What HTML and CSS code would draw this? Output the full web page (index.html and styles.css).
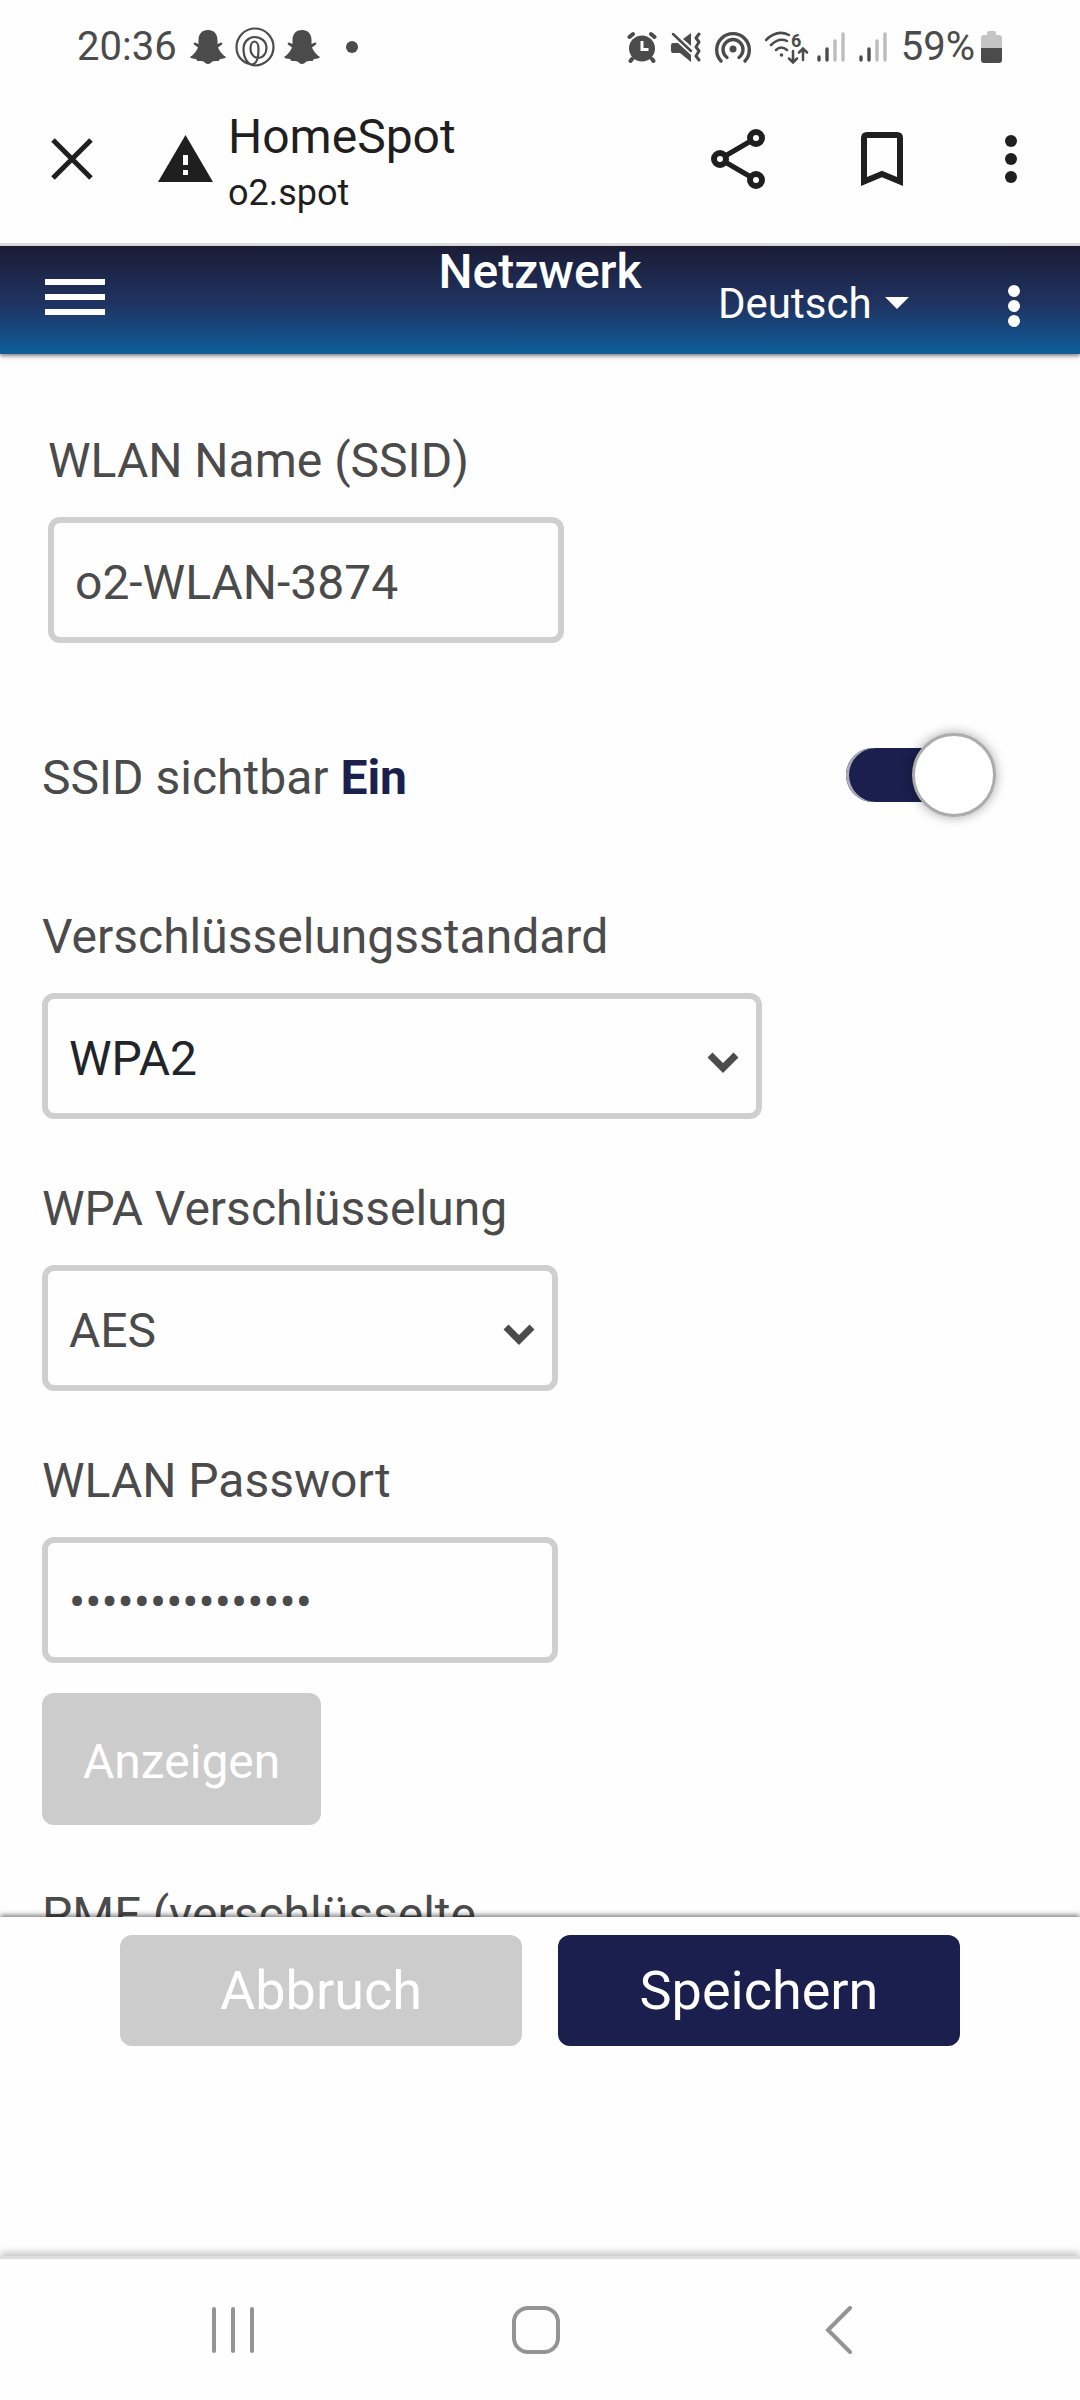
FILE: index.html
```html
<!DOCTYPE html>
<html lang="de">
<head>
    <meta charset="UTF-8">
    <meta name="viewport" content="width=device-width, initial-scale=1.0">
    <title>HomeSpot</title>
    <link rel="stylesheet" href="styles.css">
</head>
<body>
    <div class="status-bar">
        <div class="status-left">
            <span class="time">20:36</span>
            <svg width="36" height="36" viewBox="0 0 36 36" fill="#4b4b4b">
                <path d="M18 1c-6 0-9.500 4-9.500 10v4L5 13.500q-2 0-1 2l4 3C6.500 22 3.500 26 0 28c1 2 3 1.500 6 2l1.500 2c3 0 4.500-.5 6 .5C15 33.500 16 35 18 35s3-1.500 4.500-2.500c1.500-1 3-.5 6-.5l1.500-2c3-.5 5 0 6-2-3.500-2-6.500-6-8-9.500l4-3q1-2-1-2L27.500 15v-4c0-6-3.500-10-9.500-10z"/>
            </svg>
            <svg width="40" height="40" viewBox="0 0 40 40" fill="none" stroke="#4b4b4b" stroke-width="2.200">
                <path d="M17 37.500C7 36 1.500 29 1.500 20a18.500 18.500 0 1 1 18.500 18.500C13 38.500 8.500 31 8.500 22c0-7 5-12 11-12s12 4 12 11c0 6-4 10-8 10-4.500 0-8-4-8-9 0-4 1.500-7.500 4-7.500s4 3.500 4 7.500c0 7-1 15-6.500 15.500"/>
            </svg>
            <svg width="36" height="36" viewBox="0 0 36 36" fill="#4b4b4b">
                <path d="M18 1c-6 0-9.500 4-9.500 10v4L5 13.500q-2 0-1 2l4 3C6.500 22 3.500 26 0 28c1 2 3 1.500 6 2l1.500 2c3 0 4.500-.5 6 .5C15 33.500 16 35 18 35s3-1.500 4.500-2.500c1.500-1 3-.5 6-.5l1.500-2c3-.5 5 0 6-2-3.500-2-6.500-6-8-9.500l4-3q1-2-1-2L27.500 15v-4c0-6-3.500-10-9.500-10z"/>
            </svg>
            <span class="more-dot"></span>
        </div>
        <div class="status-right">
            <svg width="30" height="32" viewBox="0 0 30 32">
                <g stroke="#4b4b4b" stroke-width="4" stroke-linecap="round">
                    <path d="M2.500 6L6 3M27.500 6L24 3M5 28l-1.500 2M25 28l1.500 2"/>
                </g>
                <circle cx="15" cy="17.500" r="13" fill="#4b4b4b"/>
                <path d="M15 10v8.500h6.500" fill="none" stroke="#fefefe" stroke-width="3"/>
            </svg>
            <svg width="30" height="32" viewBox="0 0 30 32" fill="#4b4b4b">
                <path d="M2 12h5l13 12v7L9 22H2q-2 0-2-2v-6q0-2 2-2zM20 2v13l-8-7z"/>
                <path d="M2 3l18 17" fill="none" stroke="#4b4b4b" stroke-width="2.500" stroke-linecap="round"/>
                <path d="M28 3l-3 4 3 4-3 5 3 4-3 5 3 4" fill="none" stroke="#4b4b4b" stroke-width="3" stroke-linecap="round" stroke-linejoin="round"/>
            </svg>
            <svg width="36" height="34" viewBox="0 0 36 34" fill="none" stroke="#4b4b4b" stroke-width="3.400" stroke-linecap="round">
                <circle cx="18" cy="19" r="3.500" fill="#4b4b4b" stroke="none"/>
                <path d="M6 31a16.300 16.300 0 1 1 24 0"/>
                <path d="M12 27.500a10 10 0 1 1 12 0"/>
            </svg>
            <div class="network">
                <svg width="44" height="34" viewBox="0 0 44 34" fill="none" stroke="#4b4b4b" stroke-width="2.500" stroke-linecap="round">
                    <path d="M1 10Q12-1 24 5M6 15q8-8 16-4M11 20q5-5 11 0"/>
                    <circle cx="16.500" cy="25" r="1.800" fill="#4b4b4b" stroke="none"/>
                    <path d="M28 21v11M24 28.500l4 4 4-4M38 30V19M34 22.500l4-4 4 4"/>
                    <text class="wifi-gen" x="26" y="17">6</text>
                </svg>
                <svg width="28" height="32" viewBox="0 0 28 32" stroke-width="3.400" stroke-linecap="round">
                    <path d="M2 26v3M10 18v11" stroke="#4b4b4b"/>
                    <path d="M18 10v19M26 3v26" stroke="#bcbcbc"/>
                </svg>
            </div>
            <svg width="28" height="32" viewBox="0 0 28 32" stroke-width="3.400" stroke-linecap="round">
                <path d="M2 26v3M10 18v11" stroke="#4b4b4b"/>
                <path d="M18 10v19M26 3v26" stroke="#bcbcbc"/>
            </svg>
            <div class="battery">
                <span>59%</span>
                <svg width="21" height="32" viewBox="0 0 21 32">
                    <path d="M6 2q0-2 2-2h5q2 0 2 2v2h3q3 0 3 3v10H0V7q0-3 3-3h3z" fill="#c4c4c4"/>
                    <path d="M0 17h21v12q0 3-3 3H3q-3 0-3-3z" fill="#4b4b4b"/>
                </svg>
            </div>
        </div>
    </div>

    <div class="browser-bar">
        <button class="icon-button" aria-label="Schließen">
            <svg width="42" height="42" viewBox="0 0 42 42" stroke="#1f1f1f" stroke-width="5"><path d="M2 2l38 38M40 2L2 40"/></svg>
        </button>
        <div class="site">
            <svg width="55" height="48" viewBox="0 0 55 48">
                <path d="M27.500 0L55 47H0z" fill="#1f1f1f"/>
                <path d="M25 20h5v10h-5zM25 35h5v5h-5z" fill="#fefefe"/>
            </svg>
            <div class="site-text">
                <div class="site-title">HomeSpot</div>
                <div class="site-host">o2.spot</div>
            </div>
        </div>
        <div class="browser-actions">
            <button class="icon-button" aria-label="Teilen">
                <svg width="54" height="60" viewBox="0 0 54 60" fill="none" stroke="#1f1f1f" stroke-width="6">
                    <path d="M9 30L45 9M9 30l36 21" stroke-width="5"/>
                    <circle cx="9" cy="30" r="6" fill="#fefefe"/>
                    <circle cx="45" cy="9" r="6" fill="#fefefe"/>
                    <circle cx="45" cy="51" r="6" fill="#fefefe"/>
                </svg>
            </button>
            <button class="icon-button" aria-label="Lesezeichen">
                <svg width="42" height="54" viewBox="0 0 42 54" fill="none" stroke="#1f1f1f" stroke-width="6">
                    <path d="M3 49.500V6q0-3 3-3h30q3 0 3 3v43.500L21 42z"/>
                </svg>
            </button>
            <button class="icon-button" aria-label="Menü">
                <svg width="24" height="48" viewBox="0 0 24 48" fill="#1f1f1f">
                    <circle cx="12" cy="6" r="6"/><circle cx="12" cy="24" r="6"/><circle cx="12" cy="42" r="6"/>
                </svg>
            </button>
        </div>
    </div>

    <header class="header">
        <button class="icon-button menu-button" aria-label="Navigation">
            <span class="bar"></span>
            <span class="bar"></span>
            <span class="bar"></span>
        </button>
        <h1>Netzwerk</h1>
        <div class="header-right">
            <div class="language">
                <select aria-label="Sprache">
                    <option>Deutsch</option>
                </select>
                <svg width="24" height="12" viewBox="0 0 24 12" fill="#fff"><path d="M0 0h24L12 12z"/></svg>
            </div>
            <button class="icon-button" aria-label="Mehr">
                <svg width="12" height="48" viewBox="0 0 12 48" fill="#fff">
                    <circle cx="6" cy="12" r="6"/><circle cx="6" cy="27" r="6"/><circle cx="6" cy="42" r="6"/>
                </svg>
            </button>
        </div>
    </header>

    <main>
        <form id="network-form">
            <div class="field field-ssid">
                <label for="ssid">WLAN Name (SSID)</label>
                <input type="text" id="ssid" value="o2-WLAN-3874">
            </div>
            <div class="switch-row">
                <label for="visible">SSID sichtbar <strong>Ein</strong></label>
                <input type="checkbox" id="visible" class="switch" checked>
            </div>
            <div class="field">
                <label for="standard">Verschlüsselungsstandard</label>
                <div class="select select-wide">
                    <select id="standard">
                        <option>WPA2</option>
                    </select>
                    <svg width="34" height="22" viewBox="0 0 34 22"><path d="M4 4l13 13L30 4" fill="none" stroke="#4b4b4b" stroke-width="7"/></svg>
                </div>
            </div>
            <div class="field">
                <label for="cipher">WPA Verschlüsselung</label>
                <div class="select">
                    <select id="cipher" class="muted">
                        <option>AES</option>
                    </select>
                    <svg width="34" height="22" viewBox="0 0 34 22"><path d="M4 4l13 13L30 4" fill="none" stroke="#4b4b4b" stroke-width="7"/></svg>
                </div>
            </div>
            <div class="field">
                <label for="password">WLAN Passwort</label>
                <input type="password" id="password" value="passwortpasswor">
                <button type="button" class="btn btn-show">Anzeigen</button>
            </div>
            <div class="field">
                <span class="label">PMF (verschlüsselte</span>
            </div>
        </form>
    </main>

    <footer class="actions">
        <button type="reset" form="network-form" class="btn">Abbruch</button>
        <button type="submit" form="network-form" class="btn btn-primary">Speichern</button>
    </footer>

    <nav class="system-nav">
        <button class="icon-button" aria-label="Letzte Apps">
            <svg width="44" height="48" viewBox="0 0 44 48" stroke="#949494" stroke-width="4" stroke-linecap="round"><path d="M3 3v42M22 3v42M41 3v42"/></svg>
        </button>
        <button class="icon-button" aria-label="Startseite">
            <svg width="48" height="48" viewBox="0 0 48 48" fill="none" stroke="#949494" stroke-width="4"><rect x="2" y="2" width="44" height="44" rx="14"/></svg>
        </button>
        <button class="icon-button" aria-label="Zurück">
            <svg width="28" height="48" viewBox="0 0 28 48" fill="none" stroke="#949494" stroke-width="4" stroke-linecap="round"><path d="M25 2L3 24l22 22"/></svg>
        </button>
    </nav>
</body>
</html>
```
FILE: styles.css
```css
*, *::before, *::after {
    box-sizing: border-box;
}
body {
    font-family: Roboto, "Liberation Sans", sans-serif;
    font-size: 48px;
    line-height: 72px;
    margin: 0;
    height: 100vh;
    display: flex;
    flex-direction: column;
    background: #fefefe;
    color: #4b4b4b;
}
svg {
    display: block;
    flex-shrink: 0;
}
button, input, select {
    font-family: inherit;
    font-size: 48px;
    color: inherit;
    margin: 0;
}
.icon-button {
    background: none;
    border: none;
    padding: 0;
    cursor: pointer;
}

/* status bar */
.status-bar {
    display: flex;
    justify-content: space-between;
    align-items: center;
    flex-shrink: 0;
    height: 75px;
    padding: 18px 78px 0 77px;
    font-size: 40px;
    line-height: 48px;
}
.status-left, .status-right, .network, .battery {
    display: flex;
    align-items: center;
}
.status-left {
    gap: 9px;
}
.status-right {
    gap: 14px;
}
.network {
    gap: 8px;
}
.battery {
    gap: 6px;
}
.time {
    margin-right: 4px;
}
.more-dot {
    width: 12px;
    height: 12px;
    margin-left: 17px;
    border-radius: 50%;
    background: #4b4b4b;
}
.wifi-gen {
    font-size: 18px;
    font-weight: 700;
    fill: #4b4b4b;
    stroke: none;
}

/* browser bar */
.browser-bar {
    display: flex;
    align-items: center;
    flex-shrink: 0;
    height: 171px;
    padding: 0 57px 0 51px;
    gap: 65px;
    border-bottom: 3px solid #e0e0e2;
    color: #1f1f1f;
}
.site {
    display: flex;
    align-items: center;
    gap: 15px;
    flex: 1;
}
.site-text {
    padding-top: 12px;
    line-height: 56px;
}
.site-host {
    font-size: 36px;
}
.browser-actions {
    display: flex;
    align-items: center;
    gap: 96px;
}

/* page header */
.header {
    display: grid;
    grid-template-columns: 1fr auto 1fr;
    flex-shrink: 0;
    height: 108px;
    padding: 0 45px;
    background: linear-gradient(#1b1c35, #1f3463 55%, #0e5f9b);
    box-shadow: 0 2px 4px rgba(0, 0, 0, 0.5);
    color: #fff;
    position: relative;
    z-index: 1;
}
.header h1 {
    margin: 0;
    font-size: 48px;
    font-weight: 500;
    line-height: 52px;
}
.menu-button {
    display: flex;
    flex-direction: column;
    justify-content: center;
    justify-self: start;
    gap: 9px;
    width: 60px;
    padding-bottom: 6px;
}
.bar {
    height: 6px;
    background: #fff;
}
.header-right {
    display: flex;
    align-items: center;
    justify-content: flex-end;
    gap: 99px;
    padding: 6px 15px 0 0;
}
.language {
    display: flex;
    align-items: center;
    gap: 13px;
}
.language select {
    appearance: none;
    background: none;
    border: none;
    padding: 0;
    font-size: 42px;
}

/* form */
main {
    flex: 1;
    min-height: 0;
    overflow: hidden;
    padding: 71px 84px 0 42px;
}
.field {
    display: flex;
    flex-direction: column;
    align-items: flex-start;
    margin-bottom: 54px;
}
.field label {
    margin-bottom: 20px;
}
.field-ssid {
    margin-bottom: 90px;
    padding-left: 6px;
}
.field input, .select select {
    width: 516px;
    max-width: 100%;
    height: 126px;
    padding: 26px 21px 22px;
    line-height: 66px;
    border: 6px solid #cfcfcf;
    border-radius: 12px;
    background: #fefefe;
}
.select {
    position: relative;
}
.select select {
    appearance: none;
    display: block;
    padding: 27px 21px 21px;
    color: #212529;
}
.select .muted {
    color: #4b4b4b;
}
.select-wide select {
    width: 720px;
}
.select svg {
    position: absolute;
    right: 22px;
    top: 58px;
    pointer-events: none;
}
.switch-row {
    display: flex;
    justify-content: space-between;
    align-items: center;
    margin-bottom: 84px;
}
.switch-row label {
    padding-top: 6px;
}
.switch-row strong {
    color: #1a1f4d;
}
.switch {
    appearance: none;
    position: relative;
    width: 150px;
    height: 84px;
    cursor: pointer;
}
.switch::before {
    content: "";
    position: absolute;
    top: 15px;
    left: 0;
    width: 140px;
    height: 54px;
    border-radius: 27px;
    background: #a9abb8;
}
.switch::after {
    content: "";
    position: absolute;
    top: 0;
    left: 0;
    width: 84px;
    height: 84px;
    border: 3px solid #acacac;
    border-radius: 50%;
    background: #fff;
    box-shadow: 0 0 12px rgba(0, 0, 0, 0.35);
}
.switch:checked::before {
    background: #1a1f4d;
    box-shadow: inset 3px 0 0 #a9abb8;
}
.switch:checked::after {
    left: auto;
    right: 0;
}
.btn {
    border: none;
    border-radius: 12px;
    background: #ccc;
    color: #fff;
    cursor: pointer;
}
.btn-show {
    height: 132px;
    margin-top: 30px;
    padding: 4px 41px 0;
}
.btn-primary {
    background: #1a1f4d;
}

/* save bar */
.actions {
    display: flex;
    justify-content: center;
    align-items: flex-start;
    flex-shrink: 0;
    gap: 36px;
    height: 339px;
    padding: 18px 120px;
    background: #fefefe;
    box-shadow: 0 -2px 5px rgba(0, 0, 0, 0.5);
    position: relative;
}
.actions .btn {
    flex: 1;
    height: 111px;
    font-size: 54px;
}

/* android navigation */
.system-nav {
    display: grid;
    grid-template-columns: 1fr 1fr 1fr;
    justify-items: center;
    flex-shrink: 0;
    height: 144px;
    padding: 0 90px 0 82px;
    background: #fefefe;
    border-top: 3px solid #dedede;
    box-shadow: 0 -3px 8px rgba(0, 0, 0, 0.25);
    position: relative;
}
```
